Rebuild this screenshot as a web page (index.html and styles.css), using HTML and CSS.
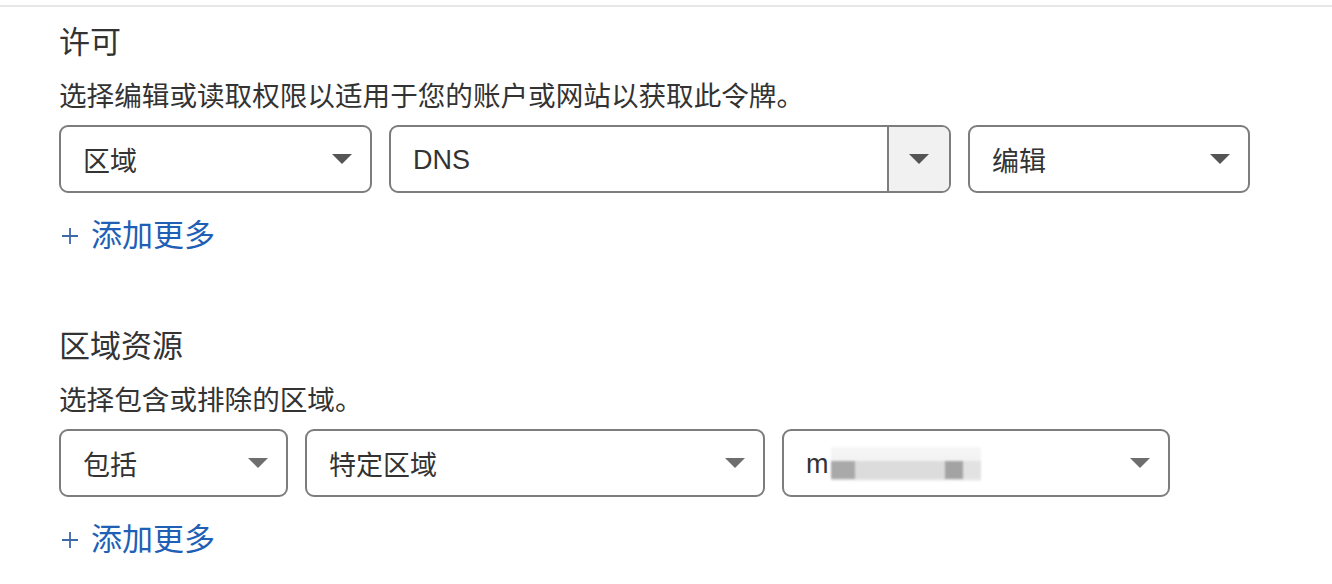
FILE: index.html
```html
<!DOCTYPE html>
<html lang="zh-CN">
<head>
<meta charset="utf-8">
<title>令牌权限</title>
<link rel="stylesheet" href="styles.css">
</head>
<body>
<div class="topline"></div>
<main class="content">
  <section class="section">
    <h2 class="section-title">许可</h2>
    <p class="section-desc">选择编辑或读取权限以适用于您的账户或网站以获取此令牌。</p>
    <div class="row">
      <div class="select w-313"><span>区域</span><svg class="caret" viewBox="0 0 20 10"><polygon points="0,0 20,0 10,10"/></svg></div>
      <div class="select split w-562"><span class="split-text latin">DNS</span><span class="split-btn"><svg class="caret" viewBox="0 0 20 10"><polygon points="0,0 20,0 10,10"/></svg></span></div>
      <div class="select w-282"><span>编辑</span><svg class="caret" viewBox="0 0 20 10"><polygon points="0,0 20,0 10,10"/></svg></div>
    </div>
    <a class="add-more" href="#"><svg class="plus" viewBox="0 0 16 16"><path d="M8 0V16M0 8H16"/></svg><span>添加更多</span></a>
  </section>

  <section class="section second">
    <h2 class="section-title">区域资源</h2>
    <p class="section-desc">选择包含或排除的区域。</p>
    <div class="row">
      <div class="select w-229"><span>包括</span><svg class="caret light" viewBox="0 0 20 10"><polygon points="0,0 20,0 10,10"/></svg></div>
      <div class="select w-460"><span>特定区域</span><svg class="caret light" viewBox="0 0 20 10"><polygon points="0,0 20,0 10,10"/></svg></div>
      <div class="select w-388"><span class="masked"><span class="latin">m</span><span class="blur"><span class="b1"></span><span class="b2"></span><span class="b3"></span><span class="b4"></span></span></span><svg class="caret light" viewBox="0 0 20 10"><polygon points="0,0 20,0 10,10"/></svg></div>
    </div>
    <a class="add-more" href="#"><svg class="plus" viewBox="0 0 16 16"><path d="M8 0V16M0 8H16"/></svg><span>添加更多</span></a>
  </section>
</main>
</body>
</html>
```

FILE: styles.css
```css
body {
  margin: 0;
  background: #ffffff;
  color: #333333;
  font-family: "Liberation Sans", "Noto Sans CJK SC", sans-serif;
}

.topline {
  margin-top: 5px;
  height: 2px;
  background: #e6e6e6;
}

.content {
  padding-left: 59px;
}

.section.second {
  margin-top: 71px;
}

.section-title {
  margin: 16px 0 0;
  font-size: 31px;
  line-height: 40px;
  font-weight: 400;
  color: #333333;
}

.section.second .section-title {
  margin-top: 0;
}

.section-desc {
  margin: 16px 0 0;
  font-size: 27.6px;
  line-height: 36px;
  color: #333333;
}

.row {
  display: flex;
  gap: 17px;
  margin-top: 10px;
}

.select {
  box-sizing: border-box;
  height: 68px;
  border: 2px solid #7d7d7d;
  border-radius: 9px;
  display: flex;
  align-items: center;
  justify-content: space-between;
  padding: 0 18px 0 22px;
  font-size: 27px;
  color: #333333;
  background: #ffffff;
}

.latin {
  padding-top: 3px;
}

.w-313 { width: 313px; }
.w-562 { width: 562px; }
.w-282 { width: 282px; }
.w-229 { width: 229px; }
.w-460 { width: 460px; }
.w-388 { width: 388px; }

.caret {
  width: 20px;
  height: 10px;
  fill: #555555;
  flex: none;
}

.caret.light {
  fill: #6e6e6e;
}

.select.split {
  padding-right: 0;
  overflow: hidden;
}

.split-text {
  flex: 1;
}

.split-btn {
  width: 62px;
  height: 100%;
  box-sizing: border-box;
  border-left: 2px solid #7d7d7d;
  background: #f1f1f1;
  display: flex;
  align-items: center;
  justify-content: center;
}

.masked {
  display: flex;
  align-items: center;
}

.blur {
  display: flex;
  align-items: center;
  margin-left: 2px;
  margin-top: 2px;
  height: 34px;
  background: linear-gradient(#f6f6f6, #ededed);
  filter: blur(1px);
}

.blur span {
  display: block;
  height: 18px;
  margin-top: 12px;
}

.b1 { width: 24px; background: #a9a9a9; }
.b2 { width: 90px; background: #dcdcdc; }
.b3 { width: 18px; background: #a3a3a3; }
.b4 { width: 18px; background: #e2e2e2; }

.add-more {
  display: inline-flex;
  align-items: center;
  gap: 13px;
  margin-top: 23px;
  font-size: 31px;
  line-height: 40px;
  color: #1f5fb6;
  text-decoration: none;
  padding-left: 3px;
}

.plus {
  width: 16px;
  height: 16px;
  stroke: #3d69a8;
  stroke-width: 1.8;
  fill: none;
}
```
